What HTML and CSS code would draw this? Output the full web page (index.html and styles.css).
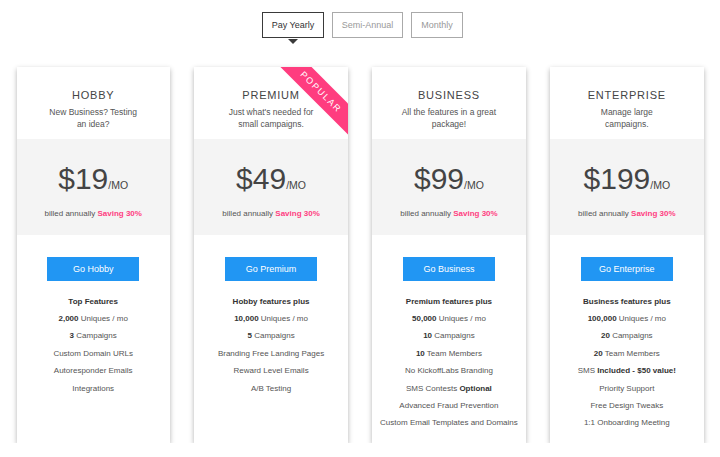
FILE: index.html
```html
<!DOCTYPE html>
<html>
<head>
<meta charset="utf-8">
<link rel="stylesheet" href="styles.css">
</head>
<body>
<div class="toggle">
  <button class="tg active">Pay Yearly</button>
  <button class="tg">Semi-Annual</button>
  <button class="tg">Monthly</button>
</div>
<div class="plans">
  <div class="card">
    <div class="head">
      <div class="title">HOBBY</div>
      <div class="desc">New Business? Testing<br>an idea?</div>
    </div>
    <div class="price">
      <div class="amount">$19<span class="per">/MO</span></div>
      <div class="billed">billed annually <b>Saving 30%</b></div>
    </div>
    <div class="body">
      <button class="go">Go Hobby</button>
      <ul class="feats">
        <li><b>Top Features</b></li>
        <li><b>2,000</b> Uniques / mo</li>
        <li><b>3</b> Campaigns</li>
        <li>Custom Domain URLs</li>
        <li>Autoresponder Emails</li>
        <li>Integrations</li>
      </ul>
    </div>
  </div>
  <div class="card">
    <div class="ribbon">POPULAR</div>
    <div class="head">
      <div class="title">PREMIUM</div>
      <div class="desc">Just what's needed for<br>small campaigns.</div>
    </div>
    <div class="price">
      <div class="amount">$49<span class="per">/MO</span></div>
      <div class="billed">billed annually <b>Saving 30%</b></div>
    </div>
    <div class="body">
      <button class="go">Go Premium</button>
      <ul class="feats">
        <li><b>Hobby features plus</b></li>
        <li><b>10,000</b> Uniques / mo</li>
        <li><b>5</b> Campaigns</li>
        <li>Branding Free Landing Pages</li>
        <li>Reward Level Emails</li>
        <li>A/B Testing</li>
      </ul>
    </div>
  </div>
  <div class="card">
    <div class="head">
      <div class="title">BUSINESS</div>
      <div class="desc">All the features in a great<br>package!</div>
    </div>
    <div class="price">
      <div class="amount">$99<span class="per">/MO</span></div>
      <div class="billed">billed annually <b>Saving 30%</b></div>
    </div>
    <div class="body">
      <button class="go">Go Business</button>
      <ul class="feats">
        <li><b>Premium features plus</b></li>
        <li><b>50,000</b> Uniques / mo</li>
        <li><b>10</b> Campaigns</li>
        <li><b>10</b> Team Members</li>
        <li>No KickoffLabs Branding</li>
        <li>SMS Contests <b>Optional</b></li>
        <li>Advanced Fraud Prevention</li>
        <li>Custom Email Templates and Domains</li>
      </ul>
    </div>
  </div>
  <div class="card">
    <div class="head">
      <div class="title">ENTERPRISE</div>
      <div class="desc">Manage large<br>campaigns.</div>
    </div>
    <div class="price">
      <div class="amount">$199<span class="per">/MO</span></div>
      <div class="billed">billed annually <b>Saving 30%</b></div>
    </div>
    <div class="body">
      <button class="go">Go Enterprise</button>
      <ul class="feats">
        <li><b>Business features plus</b></li>
        <li><b>100,000</b> Uniques / mo</li>
        <li><b>20</b> Campaigns</li>
        <li><b>20</b> Team Members</li>
        <li>SMS <b>Included - $50 value!</b></li>
        <li>Priority Support</li>
        <li>Free Design Tweaks</li>
        <li>1:1 Onboarding Meeting</li>
      </ul>
    </div>
  </div>
</div>
</body>
</html>
```
FILE: styles.css
```css
* { box-sizing: border-box; }
body {
  margin: 0;
  background: #fff;
  font-family: "Liberation Sans", Arial, sans-serif;
  color: #555;
}
.toggle {
  display: flex;
  justify-content: center;
  gap: 8px;
  padding: 12px 0 0 5px;
}
.tg {
  position: relative;
  height: 26px;
  padding: 0 9px;
  background: #fff;
  border: 1px solid #aaa;
  font-family: inherit;
  font-size: 9px;
  color: #999;
  cursor: pointer;
}
.tg.active {
  border: 1.5px solid #3a3a3a;
  color: #333;
  padding: 0 8.5px;
}
.tg.active::after {
  content: "";
  position: absolute;
  left: 50%;
  bottom: -7px;
  margin-left: -5px;
  border-left: 5px solid transparent;
  border-right: 5px solid transparent;
  border-top: 5px solid #3a3a3a;
}
.plans {
  width: 687px;
  margin: 29px auto 0;
  display: grid;
  grid-template-columns: repeat(4, 1fr);
  gap: 24.5px;
}
.card {
  position: relative;
  overflow: hidden;
  background: #fff;
  box-shadow: 0 2px 5px rgba(0, 0, 0, 0.3);
  display: flex;
  flex-direction: column;
  text-align: center;
}
.ribbon {
  position: absolute;
  left: 72px;
  top: 14px;
  width: 110px;
  height: 22px;
  line-height: 22px;
  background: #ff3d7f;
  color: #fff;
  font-size: 9px;
  letter-spacing: 1.6px;
  text-align: center;
  transform: rotate(45deg);
}
.head {
  padding: 21px 0 9px;
}
.title {
  font-size: 11px;
  line-height: 14px;
  letter-spacing: 0.8px;
  color: #444;
}
.desc {
  margin-top: 4px;
  font-size: 8.5px;
  line-height: 12px;
  color: #555;
}
.price {
  background: #f4f4f4;
  padding: 22px 0 15.5px;
}
.amount {
  font-size: 30px;
  line-height: 36px;
  color: #444;
}
.per {
  font-size: 10.5px;
  line-height: 1;
}
.billed {
  margin-top: 10.5px;
  font-size: 8px;
  line-height: 12px;
  color: #555;
}
.billed b {
  color: #ff4081;
}
.body {
  flex: 1;
  padding: 22px 0 11px;
}
.go {
  display: block;
  width: 91.5px;
  height: 24px;
  margin: 0 auto 11.5px;
  border: none;
  background: #2196f3;
  color: #fff;
  font-family: inherit;
  font-size: 9px;
  cursor: pointer;
}
.feats {
  list-style: none;
  margin: 0;
  padding: 0;
  font-size: 8px;
  line-height: 17.4px;
  color: #555;
}
.feats b {
  color: #333;
}
```
